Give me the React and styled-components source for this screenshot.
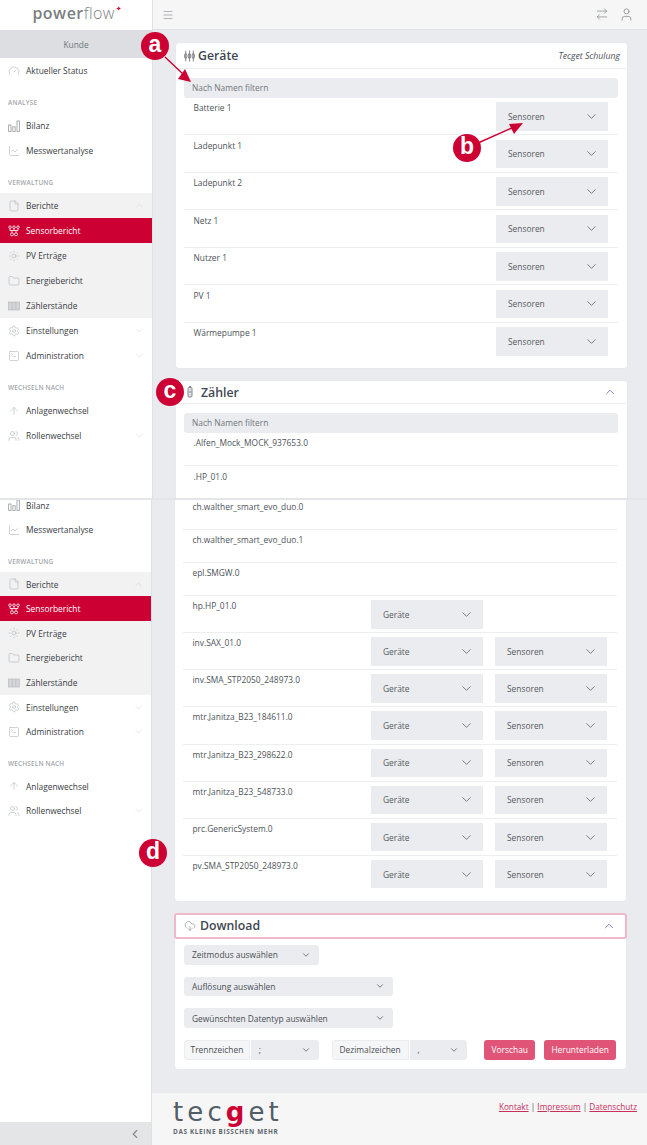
import React from "react";
import styled, { createGlobalStyle } from "styled-components";
import {
  Gauge, ChartLine, File, Sun, Folder, Settings, SquareTerminal, ArrowUp, Users,
  ChevronDown, ChevronUp, ChevronLeft, Menu, ArrowRightLeft, User, CloudDownload,
} from "lucide-react";

const GlobalStyle = createGlobalStyle`
  html, body { margin: 0; padding: 0; background: #fff; }
  body { font-family: "Open Sans", "Noto Sans", sans-serif; color: #464b52; }
  * { box-sizing: border-box; }
`;

const Page = styled.div`
  position: relative;
  width: 647px;
  height: 1145px;
  overflow: hidden;
  background: #fff;
`;

const Shot = styled.div`
  display: flex;
  height: ${(p) => p.$height}px;
  overflow: hidden;
  border-bottom: ${(p) => (p.$divided ? "2px solid #e3e5e8" : "none")};
`;

/* sidebar */
const Sidebar = styled.aside`
  flex: 0 0 ${(p) => p.$width}px;
  display: flex;
  flex-direction: column;
  background: #fff;
  border-right: 1px solid #dfe1e4;
`;

const LogoBar = styled.div`
  height: 30px;
  flex: 0 0 30px;
  display: flex;
  justify-content: center;
  align-items: center;
  font-family: "Open Sans", sans-serif;
  font-size: 16px;
  color: #7b7f82;
  padding: 0 0 5px 2px;
`;

const LogoBold = styled.span`
  font-weight: 600;
  letter-spacing: 0.5px;
`;

const LogoLight = styled.span`
  font-weight: 300;
  letter-spacing: 0.4px;
`;

const LogoStar = styled.span`
  color: #cc0033;
  font-family: "DejaVu Sans", sans-serif;
  font-size: 7px;
  line-height: 1;
  margin: -7px 0 0 1px;
`;

const CustomerBand = styled.div`
  height: 28px;
  flex: 0 0 28px;
  background: #dcdee2;
  color: #71767d;
  font-size: 8.4px;
  display: flex;
  align-items: center;
  justify-content: center;
`;

/* the lower shot is scaled a touch smaller, hence the two sizes */
const NavList = styled.div`
  --item: ${(p) => (p.$compact ? 24.6 : 25)}px;
  --section: ${(p) => (p.$compact ? 29.7 : 30)}px;
  margin-top: ${(p) => (p.$compact ? -7 : 0)}px;
`;

const SectionLabel = styled.div`
  height: var(--section, 30px);
  padding: 15px 0 0 8px;
  font-size: 6.4px;
  line-height: 9px;
  font-weight: 600;
  letter-spacing: 0.2px;
  color: #a3a7ac;
`;

const NavGroup = styled.div`
  background: #f2f2f3;
`;

const NavItem = styled.div`
  height: var(--item, 25px);
  display: flex;
  align-items: center;
  padding: 0 7px 0 8px;
  gap: 6px;
  font-size: 8.4px;
  background: ${(p) => (p.$active ? "#cc0033" : "transparent")};
  color: ${(p) => (p.$active ? "#fff" : "#383d43")};
  svg.nav-icon {
    flex: 0 0 12px;
    color: ${(p) => (p.$active ? "#fff" : "#a2a6aa")};
  }
`;

const NavText = styled.span`
  flex: 1;
  white-space: nowrap;
`;

const Spacer = styled.div`
  flex: 1;
`;

const Collapse = styled.div`
  height: 23px;
  background: #e4e5e7;
  color: #85898e;
  display: flex;
  align-items: center;
  justify-content: flex-end;
  padding-right: 9px;
`;

/* main column */
const Main = styled.main`
  flex: 1;
  min-width: 0;
  display: flex;
  flex-direction: column;
  background: #e9ebee;
`;

const TopBar = styled.header`
  height: 30px;
  flex: 0 0 30px;
  display: flex;
  align-items: center;
  padding: 0 13px 0 9px;
  background: #f6f6f7;
  border-bottom: 1px solid #e1e3e6;
  color: #777b80;
`;

const TopBarIcons = styled.div`
  margin-left: auto;
  display: flex;
  gap: 10px;
`;

const Content = styled.div`
  flex: 1;
  min-height: 0;
  padding: ${(p) => p.$pad};
  display: flex;
  flex-direction: column;
  gap: 13px;
`;

const Card = styled.section`
  flex: 0 0 auto;
  background: #fff;
  border-radius: ${(p) => p.$radius || "3px"};
  box-shadow: 0 0 1px #d5d8dc;
  margin-top: ${(p) => p.$pull || 0}px;
`;

const CardHead = styled.div`
  height: ${(p) => p.$height || 26}px;
  display: flex;
  align-items: center;
  gap: ${(p) => p.$gap || 3}px;
  padding: ${(p) => p.$pad || "0 7px 0 8px"};
  border-bottom: 1px solid #eceef0;
  outline: ${(p) => (p.$focus ? "2px solid #f0b9c8" : "none")};
  outline-offset: -1px;
  border-radius: ${(p) => (p.$focus ? "2px" : "0")};
`;

const CardTitle = styled.h2`
  margin: 0;
  font-size: 12.3px;
  font-weight: 600;
  color: #3e4650;
`;

const CardNote = styled.span`
  margin-left: auto;
  font-size: 8.7px;
  font-style: italic;
  color: #4d5257;
`;

const Fold = styled.span`
  margin-left: auto;
  display: flex;
  color: #5c5cae;
`;

const CardBody = styled.div`
  padding: ${(p) => p.$pad || "9px 9px 9px 8px"};
`;

const Filter = styled.input`
  display: block;
  width: 100%;
  height: 19.5px;
  border: none;
  border-radius: 3px;
  background: #ebecef;
  font-family: inherit;
  font-size: 8.4px;
  padding: 0 8px;
  outline: none;
  &::placeholder {
    color: #71767d;
    opacity: 1;
  }
`;

const Row = styled.div`
  display: grid;
  grid-template-columns: 1fr 112px 112px;
  column-gap: 12px;
  min-height: ${(p) => (p.$dense ? 33 : 33.5)}px;
  padding: ${(p) => (p.$dense ? "4px 10px 3.64px 9.5px" : "4.5px 10px 3.5px 9.5px")};
  border-bottom: ${(p) => (p.$last ? "none" : "1px solid #eceef0")};
`;

const RowName = styled.div`
  grid-column: 1;
  grid-row: 1;
  font-size: 8.4px;
  line-height: 12px;
  color: #4e5359;
`;

const DropButton = styled.div`
  grid-column: ${(p) => p.$col};
  grid-row: 1;
  height: 28.5px;
  background: #ebecef;
  display: flex;
  align-items: center;
  justify-content: space-between;
  padding: 0 9px 0 12px;
  font-size: 8.4px;
  color: #565b61;
`;

/* download form */
const FormStack = styled.div`
  display: flex;
  flex-direction: column;
  gap: 12.2px;
`;

const FormSelect = styled.div`
  width: ${(p) => p.$width}px;
  height: 19.5px;
  display: flex;
  align-items: center;
  justify-content: space-between;
  padding: 0 8px;
  background: #ebecef;
  border-radius: ${(p) => p.$radius || "3px"};
  font-size: 8.4px;
  color: #494e54;
`;

const FormRow = styled.div`
  display: flex;
  align-items: center;
`;

const AddonLabel = styled.div`
  width: ${(p) => p.$width}px;
  height: 19.5px;
  display: flex;
  align-items: center;
  justify-content: center;
  background: #f5f6f8;
  border: 1px solid #ebecef;
  border-radius: 3px 0 0 3px;
  margin-right: 1px;
  font-size: 8.4px;
  color: #494e54;
`;

const Gap = styled.div`
  width: ${(p) => p.$width}px;
`;

const ActionButton = styled.button`
  width: ${(p) => p.$width}px;
  height: 19.5px;
  border: none;
  border-radius: 3px;
  background: #e05577;
  color: #fff;
  font-family: inherit;
  font-size: 8.4px;
  padding: 0;
`;

const Footer = styled.footer`
  height: 52px;
  flex: 0 0 52px;
  display: flex;
  justify-content: space-between;
  padding: 8px 10px 0 21px;
  background: #f6f6f7;
`;

const Brand = styled.div`
  display: flex;
  flex-direction: column;
  align-items: flex-start;
`;

const BrandName = styled.div`
  font-family: "DejaVu Sans", sans-serif;
  font-size: 26px;
  line-height: 23px;
  letter-spacing: 4.1px;
  color: #515d67;
`;

const BrandMark = styled.span`
  color: #cc0033;
  font-weight: 700;
`;

const BrandTag = styled.div`
  font-size: 6.4px;
  font-weight: 700;
  letter-spacing: 0.65px;
  color: #5c666f;
  margin-top: 3px;
`;

const Links = styled.div`
  font-size: 8.2px;
  color: #555;
`;

const Link = styled.a`
  color: #c8305c;
  text-decoration: underline;
`;

/* annotations laid over the screenshot */
const Marker = styled.div`
  position: absolute;
  left: ${(p) => p.$x - 14}px;
  top: ${(p) => p.$y - 14}px;
  width: 28px;
  height: 28px;
  border-radius: 50%;
  background: #cc0033;
  color: #fff;
  font-family: "Liberation Sans", sans-serif;
  font-size: 23px;
  font-weight: 700;
  line-height: 25px;
  text-align: center;
`;

const ArrowLayer = styled.svg`
  position: absolute;
  left: 0;
  top: 0;
  pointer-events: none;
`;

const DevicesIcon = () => (
  <svg width="11" height="12" viewBox="0 0 11 12" fill="none" stroke="#6f7479" strokeWidth="0.8">
    <path d="M1.7 0.5v11M5.5 0.5v11M9.3 0.5v11" />
    <ellipse cx="1.7" cy="6" rx="1.2" ry="2.8" />
    <ellipse cx="5.5" cy="6" rx="1.2" ry="2.8" />
    <ellipse cx="9.3" cy="6" rx="1.2" ry="2.8" />
  </svg>
);

const MeterIcon = () => (
  <svg width="6" height="12" viewBox="0 0 6 12" fill="#dcdee0" stroke="#85898d" strokeWidth="1">
    <rect x="1" y="1.5" width="4" height="9.5" rx="1" />
    <path d="M2 0.5h2M2 6h2" />
  </svg>
);

const SensorIcon = () => (
  <svg className="nav-icon" width="12" height="12" viewBox="0 0 12 12" fill="none" stroke="currentColor" strokeWidth="0.8">
    <circle cx="2" cy="2.2" r="1.3" />
    <circle cx="6" cy="2.2" r="1.3" />
    <circle cx="10" cy="2.2" r="1.3" />
    <path d="M2 3.5v2h8v-2M6 3.5v2M4 5.5v2.2M8 5.5v2.2" />
    <circle cx="4" cy="9.3" r="1.5" />
    <circle cx="8" cy="9.3" r="1.5" />
  </svg>
);

const BarsIcon = () => (
  <svg className="nav-icon" width="12" height="12" viewBox="0 0 12 12" fill="none" stroke="currentColor" strokeWidth="0.9">
    <rect x="0.6" y="5" width="2.4" height="6.4" />
    <rect x="4.8" y="6.8" width="2.4" height="4.6" />
    <rect x="9" y="1" width="2.4" height="10.4" />
  </svg>
);

const MeterBoardIcon = () => (
  <svg className="nav-icon" width="12" height="12" viewBox="0 0 12 12" fill="#d4d6d9" stroke="#b2b5b9" strokeWidth="0.6">
    <rect x="0.5" y="2" width="11" height="8" />
    <path d="M4.2 2v8M7.8 2v8" />
  </svg>
);

const navIcon = (Icon) => <Icon className="nav-icon" size={12} strokeWidth={1} />;
const Fold12 = ({ up }) =>
  up ? <ChevronUp size={11} strokeWidth={1} color="#c4c7ca" /> : <ChevronDown size={11} strokeWidth={1} color="#c4c7ca" />;

const Nav = ({ icon, label, fold, active }) => (
  <NavItem $active={active}>
    {icon}
    <NavText>{label}</NavText>
    {fold && <Fold12 up={fold === "up"} />}
  </NavItem>
);

const LowerNav = () => (
  <>
    <Nav icon={<BarsIcon />} label="Bilanz" />
    <Nav icon={navIcon(ChartLine)} label="Messwertanalyse" />
    <SectionLabel>VERWALTUNG</SectionLabel>
    <NavGroup>
      <Nav icon={navIcon(File)} label="Berichte" fold="up" />
      <Nav icon={<SensorIcon />} label="Sensorbericht" active />
      <Nav icon={navIcon(Sun)} label="PV Erträge" />
      <Nav icon={navIcon(Folder)} label="Energiebericht" />
      <Nav icon={<MeterBoardIcon />} label="Zählerstände" />
    </NavGroup>
    <Nav icon={navIcon(Settings)} label="Einstellungen" fold="down" />
    <Nav icon={navIcon(SquareTerminal)} label="Administration" fold="down" />
    <SectionLabel>WECHSELN NACH</SectionLabel>
    <Nav icon={navIcon(ArrowUp)} label="Anlagenwechsel" />
    <Nav icon={navIcon(Users)} label="Rollenwechsel" fold="down" />
  </>
);

const selectChevron = <ChevronDown size={15} strokeWidth={1.2} color="#54595f" />;
const smallChevron = <ChevronDown size={10} strokeWidth={1.8} color="#4a4f55" />;

const Drop = ({ col, children }) => (
  <DropButton $col={col}>
    {children}
    {selectChevron}
  </DropButton>
);

const devices = ["Batterie 1", "Ladepunkt 1", "Ladepunkt 2", "Netz 1", "Nutzer 1", "PV 1", "Wärmepumpe 1"];

const meters = [
  ["ch.walther_smart_evo_duo.0"],
  ["ch.walther_smart_evo_duo.1"],
  ["epl.SMGW.0"],
  ["hp.HP_01.0", "g"],
  ["inv.SAX_01.0", "gs"],
  ["inv.SMA_STP2050_248973.0", "gs"],
  ["mtr.Janitza_B23_184611.0", "gs"],
  ["mtr.Janitza_B23_298622.0", "gs"],
  ["mtr.Janitza_B23_548733.0", "gs"],
  ["prc.GenericSystem.0", "gs"],
  ["pv.SMA_STP2050_248973.0", "gs"],
];

export default function App() {
  return (
    <Page>
      <GlobalStyle />

      <Shot $height={500} $divided>
        <Sidebar $width={153}>
          <LogoBar>
            <LogoBold>power</LogoBold>
            <LogoLight>flow</LogoLight>
            <LogoStar>✦</LogoStar>
          </LogoBar>
          <CustomerBand>Kunde</CustomerBand>
          <NavList>
            <Nav icon={navIcon(Gauge)} label="Aktueller Status" />
            <SectionLabel>ANALYSE</SectionLabel>
            <LowerNav />
          </NavList>
        </Sidebar>
        <Main>
          <TopBar>
            <Menu size={12} strokeWidth={1.1} />
            <TopBarIcons>
              <ArrowRightLeft size={14} strokeWidth={1.1} />
              <User size={15} strokeWidth={1.1} />
            </TopBarIcons>
          </TopBar>
          <Content $pad="13px 20px 0 23px">
            <Card>
              <CardHead>
                <DevicesIcon />
                <CardTitle>Geräte</CardTitle>
                <CardNote>Tecget Schulung</CardNote>
              </CardHead>
              <CardBody>
                <Filter placeholder="Nach Namen filtern" readOnly />
                {devices.map((name, i) => (
                  <Row key={name} $last={i === devices.length - 1}>
                    <RowName>{name}</RowName>
                    <Drop col={3}>Sensoren</Drop>
                  </Row>
                ))}
              </CardBody>
            </Card>
            <Card>
              <CardHead $height={23} $gap={8} $pad="0 10px 0 11px">
                <MeterIcon />
                <CardTitle>Zähler</CardTitle>
                <Fold><ChevronUp size={14} strokeWidth={1.3} /></Fold>
              </CardHead>
              <CardBody>
                <Filter placeholder="Nach Namen filtern" readOnly />
                <Row><RowName>.Alfen_Mock_MOCK_937653.0</RowName></Row>
                <Row $last><RowName>.HP_01.0</RowName></Row>
              </CardBody>
            </Card>
          </Content>
        </Main>
      </Shot>

      <Shot $height={645}>
        <Sidebar $width={152}>
          <NavList $compact>
            <LowerNav />
          </NavList>
          <Spacer />
          <Collapse><ChevronLeft size={14} strokeWidth={2} /></Collapse>
        </Sidebar>
        <Main>
          <Content $pad="0 21px 0 23px">
            <Card $radius="0 0 3px 3px" $pull={-3}>
              <CardBody $pad="0 9px 9px 8px">
                {meters.map(([name, drops], i) => (
                  <Row key={name} $dense $last={i === meters.length - 1}>
                    <RowName>{name}</RowName>
                    {drops && <Drop col={2}>Geräte</Drop>}
                    {drops === "gs" && <Drop col={3}>Sensoren</Drop>}
                  </Row>
                ))}
              </CardBody>
            </Card>
            <Card>
              <CardHead $height={24} $focus $gap={4} $pad="0 10px 0 9px">
                <CloudDownload size={12} strokeWidth={1} color="#6d7278" />
                <CardTitle>Download</CardTitle>
                <Fold><ChevronUp size={14} strokeWidth={1.3} /></Fold>
              </CardHead>
              <CardBody $pad="7px 10px 9px 9px">
                <FormStack>
                  <FormSelect $width={135}>Zeitmodus auswählen{smallChevron}</FormSelect>
                  <FormSelect $width={209}>Auflösung auswählen{smallChevron}</FormSelect>
                  <FormSelect $width={209}>Gewünschten Datentyp auswählen{smallChevron}</FormSelect>
                  <FormRow>
                    <AddonLabel $width={66}>Trennzeichen</AddonLabel>
                    <FormSelect $width={68} $radius="0 3px 3px 0">;{smallChevron}</FormSelect>
                    <Gap $width={13} />
                    <AddonLabel $width={77}>Dezimalzeichen</AddonLabel>
                    <FormSelect $width={58} $radius="0 3px 3px 0">,{smallChevron}</FormSelect>
                    <Gap $width={17} />
                    <ActionButton $width={51}>Vorschau</ActionButton>
                    <Gap $width={9} />
                    <ActionButton $width={72}>Herunterladen</ActionButton>
                  </FormRow>
                </FormStack>
              </CardBody>
            </Card>
          </Content>
          <Footer>
            <Brand>
              <BrandName>tec<BrandMark>g</BrandMark>et</BrandName>
              <BrandTag>DAS KLEINE BISSCHEN MEHR</BrandTag>
            </Brand>
            <Links>
              <Link>Kontakt</Link> | <Link>Impressum</Link> | <Link>Datenschutz</Link>
            </Links>
          </Footer>
        </Main>
      </Shot>

      <ArrowLayer width="647" height="1145">
        <path d="M165 57 L184 75" stroke="#cc0033" strokeWidth="1.4" />
        <path d="M191 82 L178 79 L185 69 Z" fill="#cc0033" />
        <path d="M478 143 L514 127" stroke="#cc0033" strokeWidth="1.4" />
        <path d="M523 123 L509 124 L514 134 Z" fill="#cc0033" />
      </ArrowLayer>
      <Marker $x={155} $y={46}>a</Marker>
      <Marker $x={467} $y={148}>b</Marker>
      <Marker $x={170} $y={392}>c</Marker>
      <Marker $x={153} $y={853}>d</Marker>
    </Page>
  );
}
